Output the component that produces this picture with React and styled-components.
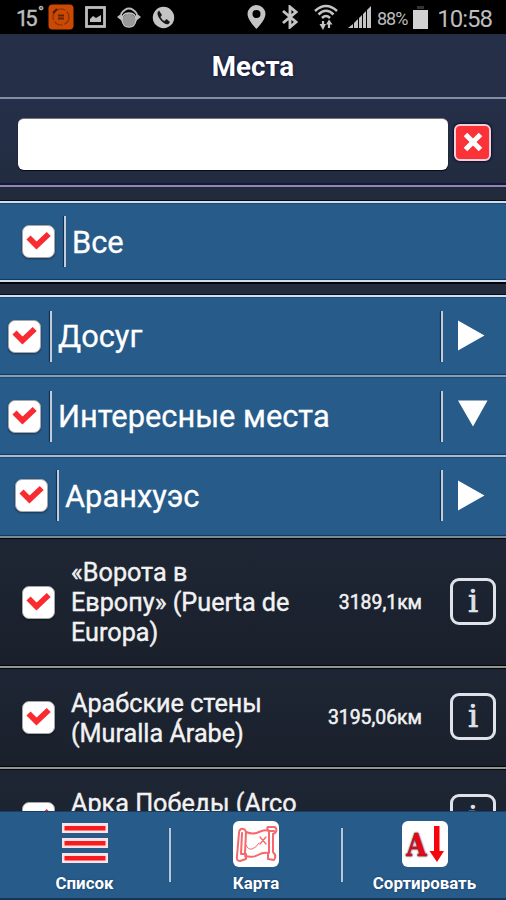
import React, { useState } from 'react';
import styled, { createGlobalStyle } from 'styled-components';

const GlobalStyle = createGlobalStyle`
  * {
    box-sizing: border-box;
  }
  body {
    margin: 0;
    background: #1b212d;
    font-family: Roboto, 'Noto Sans', sans-serif;
    overflow: hidden;
  }
`;

const ScreenEl = styled.div`
  width: 506px;
  height: 900px;
  display: flex;
  flex-direction: column;
  overflow: hidden;
  background: #1b212d;
`;

const StatusBarEl = styled.div`
  flex: none;
  height: 34px;
  padding: 0 14px 0 16px;
  display: flex;
  align-items: center;
  background: #000;
  color: #bdbdbd;
`;
const StatusIconEl = styled.svg`
  flex: none;
  display: block;
  width: ${({ width }) => width}px;
  height: ${({ height }) => height}px;
  margin-left: ${({ $gap }) => $gap || 0}px;
`;
const TemperatureEl = styled.span`
  display: flex;
  width: 24px;
  font-size: 22px;
  letter-spacing: -3px;
  white-space: nowrap;
  padding-top: 3px;
  -webkit-text-stroke: 0.4px #bdbdbd;
`;
const DegreeEl = styled.span`
  margin: -3px 0 0 3px;
  font-size: 20px;
`;
const BatteryTextEl = styled.span`
  width: 32px;
  margin-left: 6px;
  font-size: 18px;
  letter-spacing: -1px;
  padding-top: 2px;
`;
const ClockEl = styled.span`
  margin-left: auto;
  font-size: 24px;
  letter-spacing: -1px;
  padding-top: 3px;
`;

const TitleEl = styled.h1`
  flex: none;
  height: 65px;
  margin: 0;
  padding-top: 1px;
  border-bottom: 2px solid #8190a0;
  background: #252f48;
  color: #fff;
  font-size: 27.7px;
  font-weight: 700;
  line-height: 63px;
  text-align: center;
  text-shadow: 0 0 3px #0a1035;
`;

const SearchEl = styled.div`
  flex: none;
  height: 88px;
  padding: 3px 15px 0 18px;
  display: flex;
  align-items: center;
  justify-content: space-between;
  border-bottom: 2px solid #9186ae;
  background: linear-gradient(#252f49, #222c40);
  box-shadow: inset 0 -2px 0 #14183a;
`;
const InputEl = styled.input`
  width: 430px;
  height: 52px;
  padding: 0 12px;
  border: 0;
  border-top: 1px solid #777;
  border-radius: 6px;
  outline: 0;
  background: #fff;
  box-shadow: 0 1px 1px #060a14;
  font-size: 24px;
`;
const ClearEl = styled.button`
  width: 37px;
  height: 37px;
  margin-bottom: 3px;
  padding: 0;
  display: flex;
  align-items: center;
  justify-content: center;
  border: 2px solid #f6d0d4;
  border-radius: 6px;
  background: #fb3237;
  box-shadow: 0 0 2px 1px #0a1035;
`;

const GapEl = styled.div`
  flex: none;
  height: ${({ $height }) => $height}px;
  background: #222b3c;
  border-top: ${({ $shade }) => ($shade ? '2px solid #03060c' : '0')};
  border-bottom: 1px solid #070b18;
`;

const GroupEl = styled.div`
  flex: none;
  height: ${({ $height }) => $height}px;
  padding: 0 18px ${({ $bottom }) => $bottom || 0}px ${({ $indent }) => $indent}px;
  display: flex;
  align-items: center;
  border-top: ${({ $top }) => ($top ? '2px solid #d3dcea' : '0')};
  border-bottom: 2px solid ${({ $line }) => $line || '#8c9cae'};
  background: #275b8a;
  box-shadow: inset 0 2px 1px -1px #174c7e, inset 0 -2px 1px -1px #0c3b68;
`;
const DividerEl = styled.span`
  flex: none;
  width: 2px;
  height: 51px;
  background: #c3cad8;
  box-shadow: -1px 0 1px #0d2c52;
  margin-left: ${({ $gap }) => $gap || 0}px;
`;
const GroupNameEl = styled.span`
  flex: 1;
  margin-left: 6px;
  padding-top: 2px;
  color: #fff;
  font-size: 30.8px;
  line-height: 36px;
  white-space: nowrap;
  -webkit-text-stroke: 0.3px #fff;
`;
const ArrowEl = styled.svg`
  flex: none;
  width: 32px;
  height: 34px;
  margin-left: 13px;
`;

const CheckEl = styled.button`
  flex: none;
  width: 33px;
  height: 33px;
  margin-right: -1px;
  padding: 0;
  display: flex;
  border: 1px solid #a7a7aa;
  border-radius: 7px;
  background: #fff;
  box-shadow: 0 1px 2px rgba(0, 0, 0, 0.4);
`;

const PlaceEl = styled.div`
  flex: none;
  height: ${({ $height }) => $height}px;
  padding: 0 10px 0 22px;
  display: flex;
  align-items: center;
  border-bottom: 2px solid #94958f;
  background: linear-gradient(#1e2635, #1a202b);
  box-shadow: inset 0 2px 1px -1px #05070d, inset 0 -2px 1px -1px #05070d;
`;
const PlaceNameEl = styled.span`
  width: 240px;
  margin-left: 17px;
  padding-top: 2px;
  color: #f2f2f2;
  font-size: 25.2px;
  line-height: 30px;
  white-space: pre-line;
  -webkit-text-stroke: 0.4px #f2f2f2;
`;
const DistanceEl = styled.span`
  flex: 1;
  margin-right: 28px;
  color: #f2f2f2;
  font-size: 19.4px;
  text-align: right;
  white-space: nowrap;
  -webkit-text-stroke: 0.5px #f2f2f2;
`;
const InfoEl = styled.button`
  flex: none;
  width: 46px;
  height: 47px;
  margin-bottom: 2px;
  padding: 0;
  border: 3px solid #dfe2e9;
  border-radius: 9px;
  background: transparent;
  color: #dfe2e9;
  font-family: 'DejaVu Serif', serif;
  font-size: 32px;
  line-height: 41px;
  text-align: center;
  -webkit-text-stroke: 0.7px #dfe2e9;
`;

const ListEl = styled.div`
  flex: 1;
  min-height: 0;
  display: flex;
  flex-direction: column;
  overflow: hidden;
`;

const TabBarEl = styled.div`
  flex: none;
  height: 89px;
  display: grid;
  grid-template-columns: 169px 2px 170px 2px 163px;
  align-items: center;
  border-top: 1px solid #173f68;
  border-bottom: 2px solid #143557;
  background: #275b8a;
`;
const TabEl = styled.button`
  height: 86px;
  padding: 9px 0 0;
  display: flex;
  flex-direction: column;
  align-items: center;
  border: 0;
  background: transparent;
  color: #fff;
  font-family: inherit;
  font-size: 16.9px;
  font-weight: 700;
  line-height: 20px;
  gap: 6px;
  white-space: nowrap;
  text-shadow: 0 0 2px #143a66;
`;
const TabLineEl = styled.span`
  height: 54px;
  background: #b9c7d8;
  box-shadow: 0 0 1px #12365e;
`;

const CheckBox = ({ checked, onClick }) => (
  <CheckEl onClick={onClick}>
    {checked && (
      <svg width="31" height="31" viewBox="0 0 31 31">
        <path d="M5.5 11.5 13.5 19.5 25.7 8" fill="none" stroke="#f92a30" strokeWidth="5.8" />
      </svg>
    )}
  </CheckEl>
);

const Arrow = ({ open }) => (
  <ArrowEl viewBox="0 0 32 34">
    <path d={open ? 'M2 1.5H31.5L17 27.5Z' : 'M2 1.5 28.5 16.5 2 31.5Z'} fill="#fff" />
  </ArrowEl>
);

const ListIcon = () => (
  <svg width="46" height="46" viewBox="0 0 46 46">
    {[2, 17, 32].map((y) => (
      <g key={y}>
        <rect x="0" y={y} width="46" height="10" fill="#fbe3e5" />
        <rect x="2.5" y={y + 3} width="41" height="4.5" fill="#f71b20" />
      </g>
    ))}
  </svg>
);

const MapIcon = () => (
  <svg width="46" height="46" viewBox="0 0 46 46">
    <rect width="46" height="46" rx="6" fill="#fff" />
    <g fill="none" stroke="#f6686d" strokeWidth="2" strokeLinejoin="round" strokeLinecap="round">
      <path d="M13 11Q20 14 26 11T36 10V32Q30 31 25 34T12 35" />
      <path d="M13 11Q12 7 8 8Q6 9 6 12L4 35Q3 40 7 40L13 38V33H8L9 12M13 11 12 32" />
      <path d="M36 10Q33 7 35 6H42Q45 9 42 12L40 13V31Q44 35 41 39L35 38V33M36 10H41" />
      <path d="M13 24Q15 29 19 28T26 22" strokeWidth="1" />
      <path d="M27 16 33 23M33 16 27 23" strokeWidth="1.3" />
    </g>
  </svg>
);

const SortIcon = () => (
  <svg width="46" height="46" viewBox="0 0 46 46">
    <rect width="46" height="46" rx="6" fill="#fff" />
    <text
      x="4.5"
      y="35"
      textLength="20"
      lengthAdjust="spacingAndGlyphs"
      fontFamily="DejaVu Serif, serif"
      fontSize="31"
      fontWeight="700"
      fill="#f4060c"
      stroke="#f4060c"
      strokeWidth="0.6"
    >
      A
    </text>
    <path d="M32 5H37.5V30H42L35 41 27.5 30H32Z" fill="#f4060c" />
  </svg>
);

const StatusBar = () => (
  <StatusBarEl>
    <TemperatureEl>
      15<DegreeEl>˚</DegreeEl>
    </TemperatureEl>
    <StatusIconEl $gap={8} width={26} height={26} viewBox="0 0 26 26">
      <rect x="0.5" y="0.5" width="25" height="25" rx="4" fill="#cb4903" />
      <circle cx="13" cy="13" r="8" fill="none" stroke="#87320b" strokeWidth="1.2" strokeDasharray="9 2" />
      <path d="M5 9 9 5" stroke="#4e1c08" strokeWidth="2" />
      <path d="M10 11.5H16M10 14.5H16" stroke="#64230a" strokeWidth="1.8" />
    </StatusIconEl>
    <StatusIconEl $gap={11} width={21} height={22} viewBox="0 0 21 22">
      <rect x="1.5" y="1.5" width="18" height="19" fill="none" stroke="#bdbdbd" strokeWidth="2.8" />
      <path d="M5 16V13L8 10 11 12 16 9V16Z" fill="#bdbdbd" />
    </StatusIconEl>
    <StatusIconEl $gap={11} width={24} height={23} viewBox="0 0 24 23">
      <path d="M4 8Q12-3 20 8" fill="none" stroke="#bdbdbd" strokeWidth="2" />
      <path d="M0 11 5 7V15ZM24 11 19 7V15Z" fill="#bdbdbd" />
      <circle cx="12" cy="14" r="6.5" fill="#999" />
      <path d="M5 14Q5 7 12 7T19 14Q18 21 12 21T5 14Z" fill="none" stroke="#c5c5c5" strokeWidth="1.5" />
    </StatusIconEl>
    <StatusIconEl $gap={11} width={23} height={23} viewBox="0 0 23 23">
      <circle cx="11.5" cy="11.5" r="10.7" fill="#c4c4c4" />
      <path d="M7 4.5 10 9 8.5 11Q10 14 12.5 15L14.5 13 18 16 16.5 18Q13 19 9 14.5T5.5 6.5Z" fill="#171717" />
    </StatusIconEl>
    <StatusIconEl $gap={72} width={19} height={24} viewBox="0 0 19 24">
      <path
        d="M9.5 0A9 9 0 0 1 18.5 9C18.5 15 9.5 24 9.5 24S0.5 15 0.5 9A9 9 0 0 1 9.5 0ZM9.5 5A4 4 0 1 0 9.5 13A4 4 0 1 0 9.5 5Z"
        fill="#c4c4c4"
      />
    </StatusIconEl>
    <StatusIconEl $gap={15} width={18} height={24} viewBox="0 0 18 24">
      <path d="M2 6 15 17 9 22V2L15 7 2 18" fill="none" stroke="#c4c4c4" strokeWidth="2.9" />
    </StatusIconEl>
    <StatusIconEl $gap={15} width={24} height={26} viewBox="0 0 24 26">
      <path
        d="M1 7Q12-3 23 7M4.5 10.5Q12 3 19.5 10.5M8 14Q12 10 16 14"
        fill="none"
        stroke="#c4c4c4"
        strokeWidth="2.5"
      />
      <path d="M9 17V22M15 24V18" stroke="#c4c4c4" strokeWidth="2.2" />
      <path d="M5.5 20H12L9 26ZM12 20.5 15 15.5 18.5 20.5Z" fill="#c4c4c4" />
    </StatusIconEl>
    <StatusIconEl $gap={10} width={23} height={24} viewBox="0 0 23 24">
      <path d="M0 23 5 19V23ZM6 18 10 14V23H6ZM11 13 14 10V23H11ZM15 9 18 6V23H15ZM19 5 23 1V23H19Z" fill="#c4c4c4" />
    </StatusIconEl>
    <BatteryTextEl>88%</BatteryTextEl>
    <StatusIconEl $gap={4} width={15} height={24} viewBox="0 0 15 24">
      <path d="M4 1H11V4H4Z" fill="#333" />
      <path d="M0 5H15V24H0Z" fill="#d2d2d2" />
    </StatusIconEl>
    <ClockEl>10:58</ClockEl>
  </StatusBarEl>
);

const groups = [
  { id: 'leisure', name: 'Досуг', indent: 8, height: 82, top: true },
  { id: 'sights', name: 'Интересные места', indent: 8, height: 80, open: true, line: '#aeb9c4' },
  { id: 'aranjuez', name: 'Аранхуэс', indent: 15, height: 81, line: '#7d8b91', bottom: 2 },
];

const places = [
  { id: 'europa', name: '«Ворота в\nЕвропу» (Puerta de\nEuropa)', distance: '3189,1км', height: 130 },
  { id: 'muralla', name: 'Арабские стены\n(Muralla Árabe)', distance: '3195,06км', height: 101 },
  { id: 'arco', name: 'Арка Победы (Arco\nde la Victoria)', distance: '', height: 100 },
];

const App = () => {
  const [query, setQuery] = useState('');
  const [unchecked, setUnchecked] = useState({});
  const toggle = (id) => setUnchecked({ ...unchecked, [id]: !unchecked[id] });

  return (
    <ScreenEl>
      <GlobalStyle />
      <StatusBar />
      <TitleEl>Места</TitleEl>
      <SearchEl>
        <InputEl value={query} onChange={(e) => setQuery(e.target.value)} />
        <ClearEl onClick={() => setQuery('')}>
          <svg width="20" height="20" viewBox="0 0 20 20">
            <path d="M2.5 2.5 17.5 17.5M17.5 2.5 2.5 17.5" stroke="#fff" strokeWidth="5" />
          </svg>
        </ClearEl>
      </SearchEl>
      <GapEl $height={14} />
      <GroupEl $height={81} $indent={22} $top $line="#d3dcea">
        <CheckBox checked={!unchecked.all} onClick={() => toggle('all')} />
        <DividerEl $gap={10} />
        <GroupNameEl>Все</GroupNameEl>
      </GroupEl>
      <GapEl $height={13} $shade />

      <ListEl>
        {groups.map((group) => (
          <GroupEl
            key={group.id}
            $height={group.height}
            $indent={group.indent}
            $top={group.top}
            $line={group.line}
            $bottom={group.bottom}
          >
            <CheckBox checked={!unchecked[group.id]} onClick={() => toggle(group.id)} />
            <DividerEl $gap={10} />
            <GroupNameEl>{group.name}</GroupNameEl>
            <DividerEl />
            <Arrow open={group.open} />
          </GroupEl>
        ))}
        {places.map((place) => (
          <PlaceEl key={place.id} $height={place.height}>
            <CheckBox checked={!unchecked[place.id]} onClick={() => toggle(place.id)} />
            <PlaceNameEl>{place.name}</PlaceNameEl>
            <DistanceEl>{place.distance}</DistanceEl>
            <InfoEl>i</InfoEl>
          </PlaceEl>
        ))}
      </ListEl>

      <TabBarEl>
        <TabEl>
          <ListIcon />
          Список
        </TabEl>
        <TabLineEl />
        <TabEl>
          <MapIcon />
          Карта
        </TabEl>
        <TabLineEl />
        <TabEl>
          <SortIcon />
          Сортировать
        </TabEl>
      </TabBarEl>
    </ScreenEl>
  );
};

export default App;
